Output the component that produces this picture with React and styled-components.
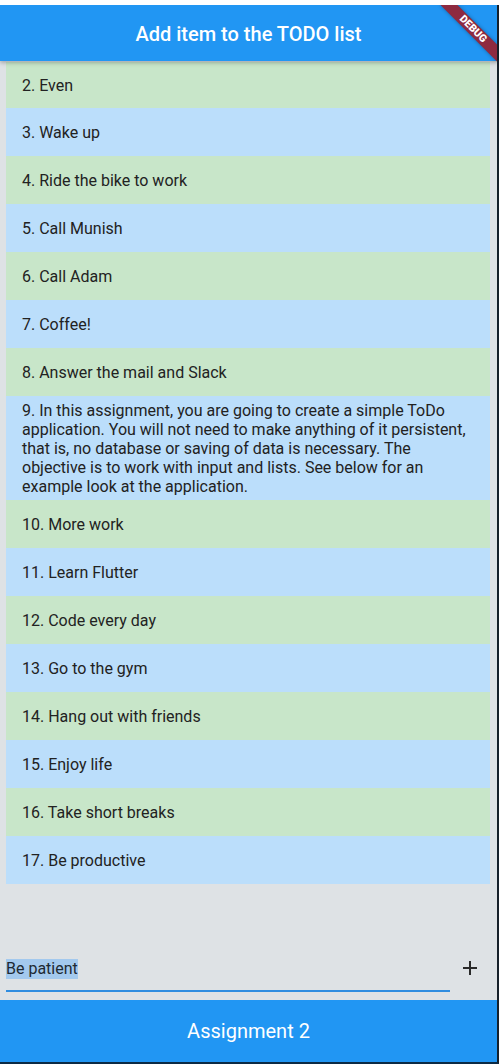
import React from "react";
import styled, { createGlobalStyle } from "styled-components";

const Global = createGlobalStyle`
  html, body { margin: 0; padding: 0; background: #ffffff; }
  body { font-family: Roboto, "Noto Sans", "Liberation Sans", sans-serif; }
  * { box-sizing: border-box; }
`;

const Page = styled.div`
  padding-top: 5px;
  width: 499px;
  background: #ffffff;
`;

const Frame = styled.div`
  position: relative;
  width: 499px;
  height: 1059px;
  border-right: 2px solid #16202a;
  border-bottom: 2px solid #0c2a44;
  display: flex;
  flex-direction: column;
  overflow: hidden;
  background: #dee2e5;
`;

const AppBar = styled.header`
  position: relative;
  z-index: 2;
  height: 56px;
  flex: none;
  background: #2196f3;
  color: #ffffff;
  display: flex;
  align-items: center;
  justify-content: center;
  padding-top: 1px;
  font-size: 20px;
  font-weight: 500;
  box-shadow: 0 2px 4px rgba(0, 0, 0, 0.25);
`;

const Body = styled.main`
  flex: 1;
  min-height: 0;
  display: flex;
  flex-direction: column;
`;

const List = styled.ul`
  flex: 1;
  min-height: 0;
  margin: 0;
  padding: 1px 7px 0 6px;
  list-style: none;
  overflow: hidden;
`;

const Item = styled.li`
  min-height: ${(p) => (p.$first ? 46 : 48)}px;
  padding: 4.5px 16px 3.5px;
  display: flex;
  align-items: center;
  background: ${(p) => (p.$tone === "green" ? "#c8e6c9" : "#bbdefb")};
  color: #222222;
  font-size: 16px;
  line-height: 19.2px;
`;

const InputRow = styled.div`
  flex: none;
  display: flex;
  align-items: center;
  padding: 0 7px 8px 6px;
`;

const Field = styled.div`
  flex: 1;
  height: 48px;
  display: flex;
  align-items: center;
  border-bottom: 2px solid #2f8de0;
  padding-top: 4px;
`;

const Selected = styled.span`
  background: #a3c9ee;
  color: #1e2a33;
  font-size: 16px;
  line-height: 20px;
`;

const AddButton = styled.button`
  width: 40px;
  height: 48px;
  border: none;
  background: transparent;
  padding: 0;
  display: flex;
  align-items: center;
  justify-content: center;
  color: #2a2a2a;
`;

const BottomBar = styled.footer`
  height: 62px;
  flex: none;
  background: #2196f3;
  color: #ffffff;
  display: flex;
  align-items: center;
  justify-content: center;
  font-size: 20px;
  font-weight: 400;
`;

const Banner = styled.div`
  position: absolute;
  z-index: 5;
  top: 18px;
  right: -16px;
  width: 80px;
  height: 12px;
  transform: rotate(45deg);
  background: #8e2a40;
  box-shadow: 0 0 4px rgba(0, 0, 0, 0.35);
  color: #ffffff;
  font-size: 10.5px;
  font-weight: 900;
  line-height: 12px;
  text-align: center;
  letter-spacing: 0;
`;

const items = [
  "2. Even",
  "3. Wake up",
  "4. Ride the bike to work",
  "5. Call Munish",
  "6. Call Adam",
  "7. Coffee!",
  "8. Answer the mail and Slack",
  "9. In this assignment, you are going to create a simple ToDo application. You will not need to make anything of it persistent, that is, no database or saving of data is necessary. The objective is to work with input and lists. See below for an example look at the application.",
  "10. More work",
  "11. Learn Flutter",
  "12. Code every day",
  "13. Go to the gym",
  "14. Hang out with friends",
  "15. Enjoy life",
  "16. Take short breaks",
  "17. Be productive",
];

export default function App() {
  return (
    <>
      <Global />
      <Page>
        <Frame>
          <AppBar>Add item to the TODO list</AppBar>
          <Body>
            <List>
              {items.map((t, i) => (
                <Item key={t} $first={i === 0} $tone={i % 2 === 0 ? "green" : "blue"}>
                  {t}
                </Item>
              ))}
            </List>
            <InputRow>
              <Field>
                <Selected>Be patient</Selected>
              </Field>
              <AddButton aria-label="add">
                <svg width="24" height="24" viewBox="0 0 24 24" fill="currentColor">
                  <path d="M19 13h-6v6h-2v-6H5v-2h6V5h2v6h6v2z" />
                </svg>
              </AddButton>
            </InputRow>
          </Body>
          <BottomBar>Assignment 2</BottomBar>
          <Banner>DEBUG</Banner>
        </Frame>
      </Page>
    </>
  );
}
